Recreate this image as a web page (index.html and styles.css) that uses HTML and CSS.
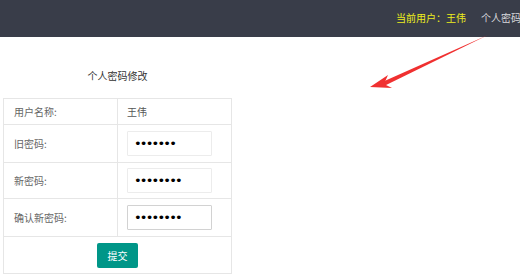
FILE: index.html
```html
<!DOCTYPE html>
<html lang="zh-CN">
<head>
    <meta charset="UTF-8">
    <title>个人密码修改</title>
    <link rel="stylesheet" href="styles.css">
</head>
<body>
    <div class="header">
        <span class="user">当前用户：王伟</span>
        <span class="nav-item">个人密码</span>
    </div>

    <svg class="arrow" width="520" height="278" viewBox="0 0 520 278">
        <polygon points="488,35 380,83 382,87" fill="#f03030"/>
        <polygon points="370,87 388,75 384,84 392,88" fill="#f03030"/>
    </svg>

    <div class="main">
        <div class="panel">
            <h2 class="title">个人密码修改</h2>
            <table class="form-table">
                <tr class="row-sm">
                    <td class="label">用户名称:</td>
                    <td class="value">王伟</td>
                </tr>
                <tr class="row-lg">
                    <td class="label">旧密码:</td>
                    <td class="value"><input type="password" class="pwd" value="1234567"></td>
                </tr>
                <tr class="row-md">
                    <td class="label">新密码:</td>
                    <td class="value"><input type="password" class="pwd" value="12345678"></td>
                </tr>
                <tr class="row-lg">
                    <td class="label">确认新密码:</td>
                    <td class="value"><input type="password" id="confirm" class="pwd" value="12345678"></td>
                </tr>
                <tr class="row-btn">
                    <td colspan="2" class="actions"><button type="button" class="btn">提交</button></td>
                </tr>
            </table>
        </div>
    </div>

    <script src="main.js"></script>
</body>
</html>
```

FILE: styles.css
```css
/* page */
body {
    margin: 0;
    background: #fff;
    font-family: "Microsoft YaHei", "Noto Sans CJK SC", "Liberation Sans", sans-serif;
    font-size: 10px;
    color: #666;
    overflow: hidden;
}

/* top bar */
.header {
    height: 37px;
    background: #393d49;
    display: flex;
    align-items: center;
    justify-content: flex-end;
    gap: 15px;
    padding-bottom: 2px;
    box-sizing: border-box;
    white-space: nowrap;
}
.user { color: #eded1c; }
.nav-item { color: #d8d9dc; margin-right: -1px; }

.arrow { position: absolute; left: 0; top: 0; pointer-events: none; }

/* content */
.main { padding: 29px 0 0 3px; }
.panel { width: 229px; }
.title {
    margin: 0 0 12px;
    height: 20px;
    line-height: 20px;
    text-align: center;
    font-size: 10px;
    font-weight: normal;
    color: #333;
}

.form-table {
    width: 229px;
    border-collapse: collapse;
    table-layout: fixed;
}
.form-table td {
    border: 1px solid #e6e6e6;
    padding: 0;
    vertical-align: middle;
}
.label { width: 103px; padding-left: 10px !important; }
.value { padding-left: 9px !important; color: #555; }
.row-sm td { height: 25px; }
.row-md td { height: 35px; }
.row-lg td { height: 37px; }
.row-btn td { height: 36px; }

.pwd {
    width: 85px;
    height: 25px;
    box-sizing: border-box;
    border: 1px solid #ececec;
    border-radius: 1px;
    padding: 0 6px;
    font-size: 13px;
    font-family: "DejaVu Sans", sans-serif;
    letter-spacing: -1.8px;
    color: #000;
    caret-color: #000;
    background: #fff;
    display: block;
}
.pwd:focus { outline: none; border-color: #d2d2d2; }

.actions { text-align: center; }
.btn {
    width: 41px;
    height: 25px;
    border: none;
    border-radius: 2px;
    background: #009688;
    color: #fff;
    font-family: "Microsoft YaHei", "Noto Sans CJK SC", sans-serif;
    font-size: 10px;
    padding: 0;
    cursor: pointer;
}
```

FILE: main.js
```js
// focus the confirm field with the caret after the last character
const confirmInput = document.getElementById('confirm');
confirmInput.focus();
confirmInput.setSelectionRange(confirmInput.value.length, confirmInput.value.length);
```
